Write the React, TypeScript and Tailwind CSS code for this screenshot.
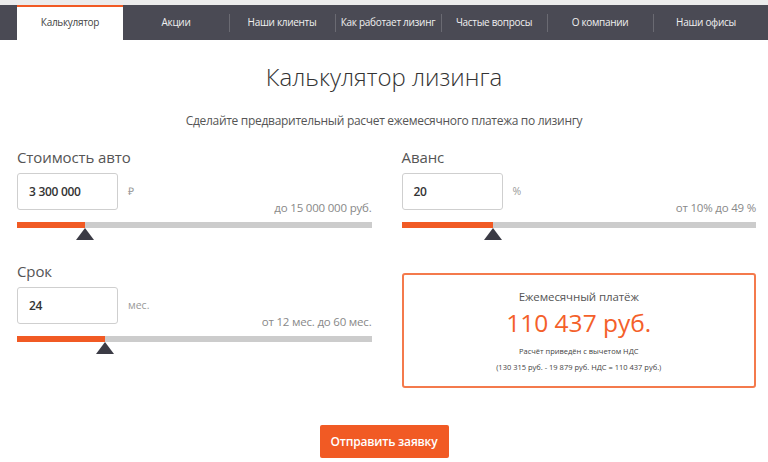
import React from 'react';

interface Field {
  id: number;
  label: string;
  value: string;
  unit: string;
  range: string;
  fill: number;
}

const navItems = [
  'Калькулятор',
  'Акции',
  'Наши клиенты',
  'Как работает лизинг',
  'Частые вопросы',
  'О компании',
  'Наши офисы',
];

const price: Field = { id: 1, label: 'Стоимость авто', value: '3 300 000', unit: '₽', range: 'до 15 000 000 руб.', fill: 68 };
const advance: Field = { id: 2, label: 'Аванс', value: '20', unit: '%', range: 'от 10% до 49 %', fill: 91 };
const term: Field = { id: 3, label: 'Срок', value: '24', unit: 'мес.', range: 'от 12 мес. до 60 мес.', fill: 88 };

const SliderField: React.FC<{ field: Field }> = ({ field }) => (
  <div>
    <div className="text-[15px] leading-[20px] text-[#555] tracking-[-0.1px]">{field.label}</div>
    <div className="mt-[6px] flex items-end">
      <div className="w-[101px] h-[37px] border border-[#cfcfcf] rounded-[3px] flex items-center pl-[11px] text-[12px] font-semibold text-[#333] tracking-[-0.3px]">
        {field.value}
      </div>
      <div className="ml-[10px] self-center text-[10.5px] text-[#999]">{field.unit}</div>
      <div className="ml-auto -mb-[6px] text-[11.5px] leading-[16px] text-[#888] tracking-[-0.2px]">{field.range}</div>
    </div>
    <div className="relative mt-[12px] h-[6px] bg-[#cccccc]">
      <div className="h-full bg-[#f15a24]" style={{ width: `${field.fill}px` }} />
      <div
        className="absolute top-[6px] w-0 h-0 border-l-[9px] border-r-[9px] border-b-[12px] border-l-transparent border-r-transparent border-b-[#3b3b45]"
        style={{ left: `${field.fill - 9}px` }}
      />
    </div>
  </div>
);

const App: React.FC = () => {
  return (
    <div className="w-[768px] h-[462px] bg-white overflow-hidden font-['Open_Sans',sans-serif]">
      {/* Top menu */}
      <div className="h-[5px] bg-[#ececec]" />
      <nav className="h-[35px] bg-[#4a4a54] flex pl-[17px]">
        {navItems.map((item, i) => (
          <div key={item} className="relative w-[106px] flex items-center justify-center">
            {i === 0 ? (
              <div className="absolute inset-0 bg-white border-t-2 border-[#f15a24]" />
            ) : null}
            {i > 1 ? <div className="absolute left-0 top-[9px] h-[18px] w-px bg-[#6a6a72]" /> : null}
            <span
              className={`relative whitespace-nowrap text-[10px] tracking-[-0.3px] ${
                i === 0 ? 'text-[#444]' : 'text-[#f0f0f0]'
              }`}
            >
              {item}
            </span>
          </div>
        ))}
      </nav>

      {/* Heading */}
      <h1 className="mt-[21px] text-center text-[24px] leading-[32px] font-light text-[#333]">
        Калькулятор лизинга
      </h1>
      <p className="mt-[19px] text-center text-[12px] leading-[18px] text-[#555] tracking-[-0.3px]">
        Сделайте предварительный расчет ежемесячного платежа по лизингу
      </p>

      {/* Calculator */}
      <div className="ml-[17px] w-[739px] mt-[17px] grid grid-cols-2 gap-x-[30px] gap-y-[33px]">
        <SliderField field={price} />
        <SliderField field={advance} />
        <SliderField field={term} />
        <div className="mt-[12px] h-[115px] border-2 border-[#f47a4c] rounded-[3px] flex flex-col items-center pt-[13px]">
          <div className="text-[11.5px] leading-[18px] text-[#555] tracking-[-0.1px]">Ежемесячный платёж</div>
          <div className="mt-[1px] text-[24.5px] leading-[32px] text-[#f4602a]">110 437 руб.</div>
          <div className="mt-[6px] text-[7.5px] leading-[12px] text-[#444]">Расчёт приведён с вычетом НДС</div>
          <div className="mt-[4px] text-[7.5px] leading-[12px] text-[#444]">(130 315 руб. - 19 879 руб. НДС = 110 437 руб.)</div>
        </div>
      </div>

      <div className="mt-[37px] flex justify-center">
        <button className="w-[129px] h-[33px] bg-[#f15a24] rounded-[2px] text-white text-[12px] font-semibold tracking-[-0.2px]">
          Отправить заявку
        </button>
      </div>
    </div>
  );
};

export default App;
